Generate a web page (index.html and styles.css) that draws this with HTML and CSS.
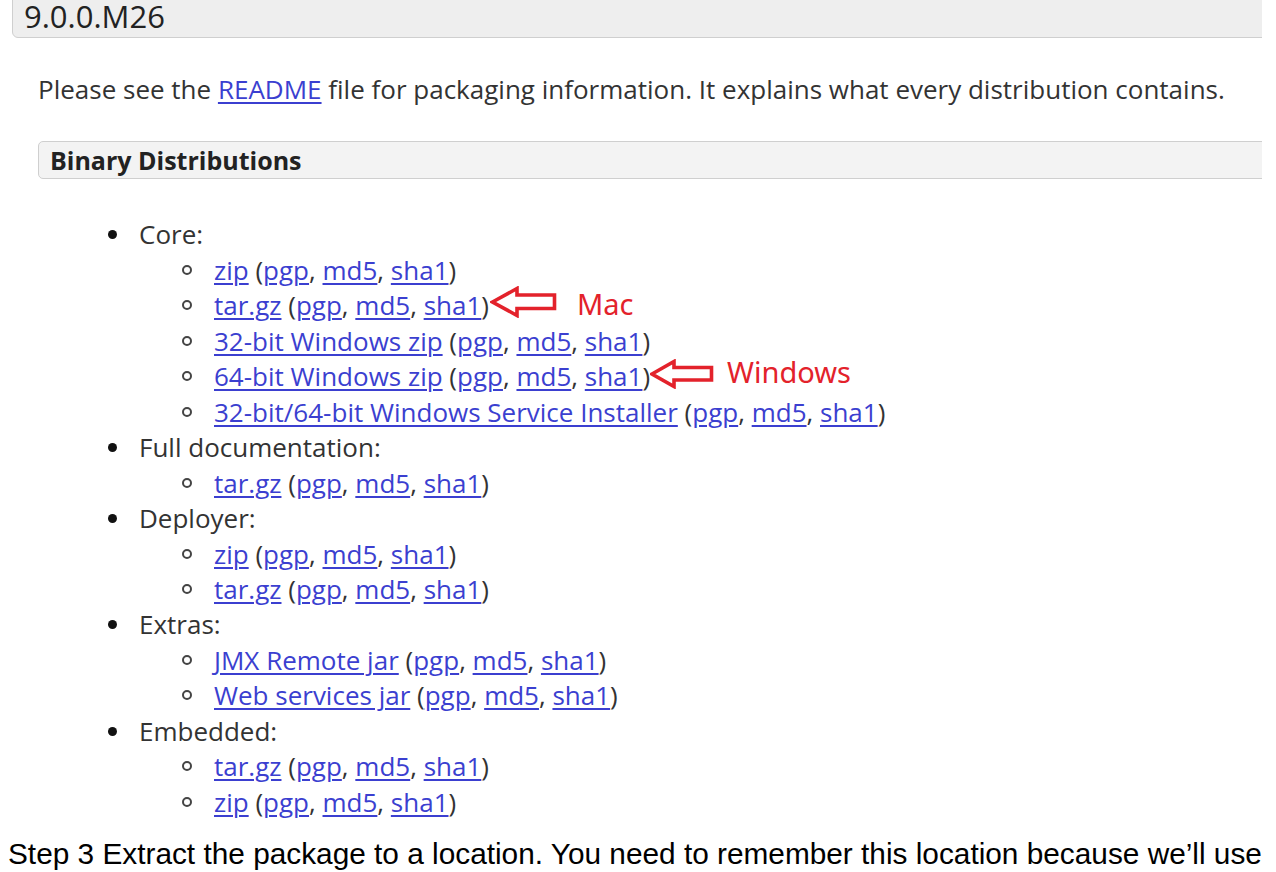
FILE: index.html
```html
<!DOCTYPE html>
<html>
<head>
<meta charset="utf-8">
<link rel="stylesheet" href="styles.css">
</head>
<body>
<div class="shot">
  <h3 class="ver">9.0.0.M26</h3>
  <div class="sect">
    <p class="intro">Please see the <a href="#">README</a> file for packaging information. It explains what every distribution contains.</p>
    <h4 class="sub">Binary Distributions</h4>
    <ul class="l1">
      <li>Core:
        <ul class="l2">
          <li><a href="#">zip</a> (<a href="#">pgp</a>, <a href="#">md5</a>, <a href="#">sha1</a>)</li>
          <li><a href="#">tar.gz</a> (<a href="#">pgp</a>, <a href="#">md5</a>, <a href="#">sha1</a>)<svg class="arrow mac" width="68" height="32" viewBox="0 0 68 32"><path d="M2.5 16 L27 2.5 L27 9 L64.5 9 L64.5 22.5 L27 22.5 L27 29.5 Z" fill="none" stroke="#e3222b" stroke-width="3.6" stroke-linejoin="miter"/></svg><span class="note">Mac</span></li>
          <li><a href="#">32-bit Windows zip</a> (<a href="#">pgp</a>, <a href="#">md5</a>, <a href="#">sha1</a>)</li>
          <li><a href="#">64-bit Windows zip</a> (<a href="#">pgp</a>, <a href="#">md5</a>, <a href="#">sha1</a>)<svg class="arrow win" width="64" height="30" viewBox="0 0 64 30"><path d="M2 15 L24 2.5 L24 8.5 L61.5 8.5 L61.5 21 L24 21 L24 27.5 Z" fill="none" stroke="#e3222b" stroke-width="3.6" stroke-linejoin="miter"/></svg><span class="note win-note">Windows</span></li>
          <li><a href="#">32-bit/64-bit Windows Service Installer</a> (<a href="#">pgp</a>, <a href="#">md5</a>, <a href="#">sha1</a>)</li>
        </ul>
      </li>
      <li>Full documentation:
        <ul class="l2">
          <li><a href="#">tar.gz</a> (<a href="#">pgp</a>, <a href="#">md5</a>, <a href="#">sha1</a>)</li>
        </ul>
      </li>
      <li>Deployer:
        <ul class="l2">
          <li><a href="#">zip</a> (<a href="#">pgp</a>, <a href="#">md5</a>, <a href="#">sha1</a>)</li>
          <li><a href="#">tar.gz</a> (<a href="#">pgp</a>, <a href="#">md5</a>, <a href="#">sha1</a>)</li>
        </ul>
      </li>
      <li>Extras:
        <ul class="l2">
          <li><a href="#">JMX Remote jar</a> (<a href="#">pgp</a>, <a href="#">md5</a>, <a href="#">sha1</a>)</li>
          <li><a href="#">Web services jar</a> (<a href="#">pgp</a>, <a href="#">md5</a>, <a href="#">sha1</a>)</li>
        </ul>
      </li>
      <li>Embedded:
        <ul class="l2">
          <li><a href="#">tar.gz</a> (<a href="#">pgp</a>, <a href="#">md5</a>, <a href="#">sha1</a>)</li>
          <li><a href="#">zip</a> (<a href="#">pgp</a>, <a href="#">md5</a>, <a href="#">sha1</a>)</li>
        </ul>
      </li>
    </ul>
  </div>
</div>
<p class="step">Step 3 Extract the package to a location. You need to remember this location because we’ll use</p>
</body>
</html>
```

FILE: styles.css
```css
html, body {
  margin: 0;
  padding: 0;
  background: #fff;
}

.shot {
  width: 1262px;
  height: 826px;
  overflow: hidden;
  font-family: "Open Sans", "Noto Sans", sans-serif;
  color: #333;
  font-size: 26px;
  line-height: 35.45px;
}

.ver {
  margin: -8px -30px 0 12px;
  padding: 2px 12px 0 11px;
  height: 46px;
  box-sizing: border-box;
  background: #eeeeee;
  border: 1px solid #cfcfcf;
  border-radius: 6px;
  font-size: 31px;
  font-weight: normal;
  line-height: 42px;
  color: #222;
}

.sect {
  padding-left: 38px;
}

.intro {
  margin: 34px 0 0 0;
}

.sub {
  margin: 34px -30px 0 0;
  height: 38px;
  box-sizing: border-box;
  background: #f3f3f3;
  border: 1px solid #cfcfcf;
  border-radius: 5px;
  padding: 0 11px;
  font-size: 25px;
  font-weight: bold;
  line-height: 36px;
  color: #222;
}

a {
  color: #3b3fd0;
  text-decoration: underline;
  text-decoration-thickness: 1.5px;
  text-underline-offset: 3px;
}

.l1 {
  list-style: none;
  margin: 38px 0 0 0;
  padding: 0 0 0 101px;
}

.l1 > li {
  position: relative;
}

.l1 > li::before {
  content: "";
  position: absolute;
  left: -31px;
  top: 13px;
  width: 9px;
  height: 9px;
  border-radius: 50%;
  background: #111;
}

.l2 {
  list-style: none;
  margin: 0;
  padding: 0 0 0 75px;
}

.l2 > li {
  position: relative;
}

.l2 > li::before {
  content: "";
  position: absolute;
  left: -32px;
  top: 12px;
  width: 6px;
  height: 6px;
  border-radius: 50%;
  border: 2px solid #444;
}

.arrow {
  display: inline-block;
  vertical-align: middle;
  margin-top: -14px;
  margin-bottom: -14px;
  position: relative;
  top: -5px;
}

.arrow.mac {
  margin-left: 1px;
  top: -6px;
}

.note {
  color: #e3222b;
  font-family: "Noto Sans", "Open Sans", sans-serif;
  font-size: 29px;
  line-height: 20px;
  margin-left: 19px;
  position: relative;
  top: 0;
}

.win-note {
  margin-left: 13px;
  top: -3px;
}

.step {
  margin: 0;
  padding: 10px 0 0 8px;
  font-family: "Liberation Sans", Arial, sans-serif;
  font-size: 29.8px;
  line-height: 36px;
  color: #000;
  white-space: nowrap;
}
```
